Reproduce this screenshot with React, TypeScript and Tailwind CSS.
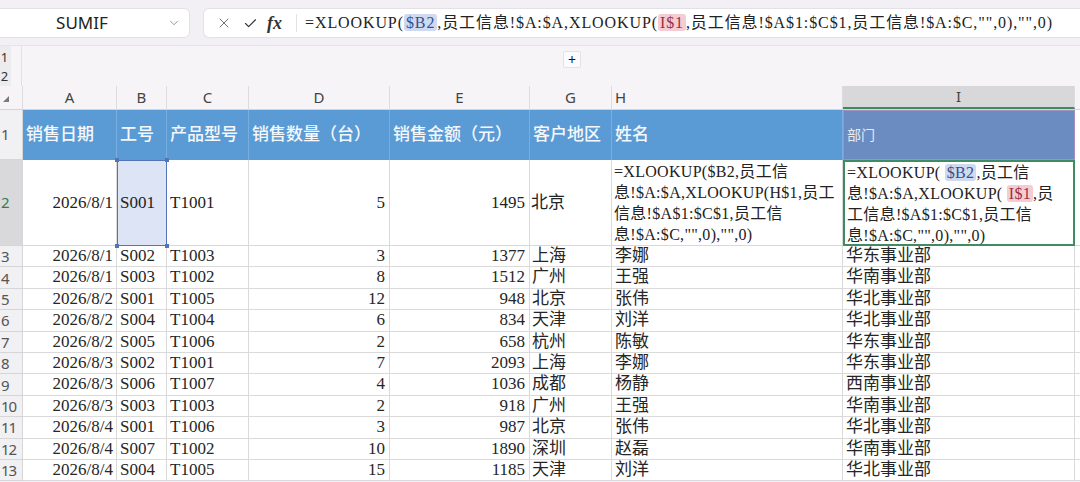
import { X, Check, ChevronDown } from "lucide-react";

const serif = "font-['Liberation_Serif','Noto_Sans_CJK_SC',serif]";
const sans = "font-['Noto_Sans','Liberation_Sans',sans-serif]";

// column widths for A, B, C, D, E, G, H, I
const colW = ["w-[94px]", "w-[50px]", "w-[82px]", "w-[141px]", "w-[140px]", "w-[82px]", "w-[231px]", "w-[232px]"];
const colNames = ["A", "B", "C", "D", "E", "G", "H", "I"];
const headers = ["销售日期", "工号", "产品型号", "销售数量（台）", "销售金额（元）", "客户地区", "姓名", "部门"];

type Row = [string, string, string, number, number, string, string, string];

const rows: Row[] = [
  ["2026/8/1", "S002", "T1003", 3, 1377, "上海", "李娜", "华东事业部"],
  ["2026/8/1", "S003", "T1002", 8, 1512, "广州", "王强", "华南事业部"],
  ["2026/8/2", "S001", "T1005", 12, 948, "北京", "张伟", "华北事业部"],
  ["2026/8/2", "S004", "T1004", 6, 834, "天津", "刘洋", "华北事业部"],
  ["2026/8/2", "S005", "T1006", 2, 658, "杭州", "陈敏", "华东事业部"],
  ["2026/8/3", "S002", "T1001", 7, 2093, "上海", "李娜", "华东事业部"],
  ["2026/8/3", "S006", "T1007", 4, 1036, "成都", "杨静", "西南事业部"],
  ["2026/8/3", "S003", "T1003", 2, 918, "广州", "王强", "华南事业部"],
  ["2026/8/4", "S001", "T1006", 3, 987, "北京", "张伟", "华北事业部"],
  ["2026/8/4", "S007", "T1002", 10, 1890, "深圳", "赵磊", "华南事业部"],
  ["2026/8/4", "S004", "T1005", 15, 1185, "天津", "刘洋", "华北事业部"],
];

const RefB2 = () => (
  <span className="bg-[#cfdaf1] text-[#34508f] rounded-[3px] px-[2px]">$B2</span>
);
const RefI1 = () => (
  <span className="bg-[#f3cdd3] text-[#9c2f3f] rounded-[3px] px-[2px]">I$1</span>
);

function RowHead({ n, active, h }: { n: number; active?: boolean; h: string }) {
  return (
    <div
      className={`w-[23px] shrink-0 ${h} border-r border-b border-[#d6d6d8] ${
        active ? "bg-[#d9d9db]" : "bg-[#f1f0f2]"
      } flex items-center pl-[1px] ${sans}`}
    >
      <span className={`text-[15px] tracking-[-1px] ${active ? "text-[#2f7d55]" : "text-[#555]"}`}>{n}</span>
    </div>
  );
}

export default function App() {
  return (
    <div className={`w-[1080px] h-[482px] overflow-hidden bg-[#f2f0f4] ${serif}`}>
      {/* name box + formula bar */}
      <div className="h-[45px] flex items-center pt-[1px]">
        <div className={`ml-[-6px] w-[196px] h-[30px] bg-white rounded-md border border-[#e3e1e6] flex items-center ${sans}`}>
          <span className="flex-1 text-center text-[17px] text-[#222] pl-[2px]">SUMIF</span>
          <ChevronDown className="w-[14px] h-[14px] text-[#888] mr-[8px]" strokeWidth={1.5} />
        </div>
        <div className="ml-[13px] flex-1 h-[30px] bg-white rounded-l-md border border-r-0 border-[#e3e1e6] flex items-center">
          <X className="ml-[12px] w-[16px] h-[16px] text-[#666]" strokeWidth={1.4} />
          <Check className="ml-[11px] w-[15px] h-[15px] text-[#333]" strokeWidth={1.8} />
          <span className="ml-[9px] text-[18px] italic font-bold text-[#333] leading-none">fx</span>
          <span className="ml-[14px] w-px h-[18px] bg-[#e2e2e2]" />
          <div className="ml-[8px] text-[16px] text-[#222] whitespace-nowrap tracking-[0.9px]">
            =XLOOKUP(<RefB2 />,员工信息!$A:$A,XLOOKUP(<RefI1 />,员工信息!$A$1:$C$1,员工信息!$A:$C,"",0),"",0)
          </div>
        </div>
      </div>

      {/* outline levels strip */}
      <div className="h-[41px] flex bg-[#f6f4f7] border-t border-[#e6e4e8]">
        <div className={`w-[11px] flex flex-col items-center justify-center gap-[1px] bg-[#ecebee] text-[13px] text-[#333] leading-[18px] ${sans}`}>
          <span className="ml-[-2px]">1</span>
          <span className="ml-[-2px]">2</span>
        </div>
        <div className="w-[11px] border-r border-[#e2e0e4]" />
        <div className="flex-1 flex justify-center pt-[5px]">
          <div className="ml-[42px] w-[18px] h-[17px] bg-[#fbfafc] border border-[#e4e2e6] rounded-[2px] flex items-center justify-center text-[14px] font-bold text-[#111] leading-none">
            +
          </div>
        </div>
      </div>

      {/* column letters */}
      <div className={`h-[24px] flex bg-[#f6f4f7] border-b border-[#d4d3d6] ${sans}`}>
        <div className="w-[23px] shrink-0 border-r border-[#dcdbde] relative">
          <div className="absolute left-[3px] bottom-[7px] w-0 h-0 border-l-[6px] border-l-transparent border-b-[6px] border-b-[#7a7a7a]" />
        </div>
        {colNames.map((c, i) => (
          <div
            key={c}
            className={`${colW[i]} shrink-0 flex items-center text-[15px] text-[#444] border-r border-[#dcdbde] ${
              i === 7 ? "bg-[#d8d7da] border-b-2 border-b-[#3b8a60] justify-center" : i === 6 ? "pl-[3px]" : "justify-center"
            }`}
          >
            {c}
          </div>
        ))}
      </div>

      {/* sheet */}
      <div className="bg-white">
        {/* header row */}
        <div className="flex h-[50px]">
          <RowHead n={1} h="h-[50px]" />
          {headers.map((t, i) => (
            <div
              key={t}
              className={`${colW[i]} shrink-0 flex items-center pl-[3px] ${
                i === 7
                  ? "bg-[#6a8cc1] border border-[#a58fbf] text-[14px] text-[#e6e9f2]"
                  : "bg-[#5b9bd5] border-r border-[#78afe0] text-[17px] text-[#f4f8fc] font-medium"
              } whitespace-nowrap`}
            >
              {t}
            </div>
          ))}
          <div className="flex-1 bg-white" />
        </div>

        {/* row 2 with formulas */}
        <div className="flex h-[86px] text-[17px] text-[#222]">
          <RowHead n={2} active h="h-[86px]" />
          <div className={`${colW[0]} shrink-0 flex items-center justify-end pr-[3px] border-r border-b border-[#d9d9d9]`}>2026/8/1</div>
          <div className={`${colW[1]} shrink-0 flex items-center pl-[2px] bg-[#dce4f5] border border-[#5474b9] relative`}>
            S001
            <span className="absolute -left-[3px] -top-[3px] w-[4px] h-[4px] bg-[#5474b9]" />
            <span className="absolute -right-[3px] -top-[3px] w-[4px] h-[4px] bg-[#5474b9]" />
            <span className="absolute -left-[3px] -bottom-[3px] w-[4px] h-[4px] bg-[#5474b9]" />
            <span className="absolute -right-[3px] -bottom-[3px] w-[4px] h-[4px] bg-[#5474b9]" />
          </div>
          <div className={`${colW[2]} shrink-0 flex items-center pl-[3px] border-r border-b border-[#d9d9d9]`}>T1001</div>
          <div className={`${colW[3]} shrink-0 flex items-center justify-end pr-[4px] border-r border-b border-[#d9d9d9]`}>5</div>
          <div className={`${colW[4]} shrink-0 flex items-center justify-end pr-[4px] border-r border-b border-[#d9d9d9]`}>1495</div>
          <div className={`${colW[5]} shrink-0 flex items-center pl-[1px] border-r border-b border-[#d9d9d9]`}>北京</div>
          <div className={`${colW[6]} shrink-0 pl-[2px] pt-[1px] text-[16px] leading-[21px] tracking-[0.3px] whitespace-nowrap border-r border-b border-[#d9d9d9]`}>
            <div>=XLOOKUP($B2,员工信</div>
            <div>息!$A:$A,XLOOKUP(H$1,员工</div>
            <div>信息!$A$1:$C$1,员工信</div>
            <div>息!$A:$C,"",0),"",0)</div>
          </div>
          <div className={`${colW[7]} shrink-0 pl-[2px] text-[16px] leading-[21px] tracking-[0.3px] whitespace-nowrap border-2 border-[#3f8c62]`}>
            <div>=XLOOKUP( <RefB2 />,员工信</div>
            <div>息!$A:$A,XLOOKUP( <RefI1 />,员</div>
            <div>工信息!$A$1:$C$1,员工信</div>
            <div>息!$A:$C,"",0),"",0)</div>
          </div>
          <div className="flex-1 border-b border-[#d9d9d9]" />
        </div>

        {/* data rows */}
        {rows.map((r, idx) => (
          <div key={idx} className="flex h-[21.4px] text-[17px] leading-[20px] text-[#262626]">
            <RowHead n={idx + 3} h="h-[21.4px]" />
            <div className={`${colW[0]} shrink-0 text-right pr-[3px] border-r border-b border-[#dadada]`}>{r[0]}</div>
            <div className={`${colW[1]} shrink-0 pl-[3px] border-r border-b border-[#dadada]`}>{r[1]}</div>
            <div className={`${colW[2]} shrink-0 pl-[3px] border-r border-b border-[#dadada]`}>{r[2]}</div>
            <div className={`${colW[3]} shrink-0 text-right pr-[4px] border-r border-b border-[#dadada]`}>{r[3]}</div>
            <div className={`${colW[4]} shrink-0 text-right pr-[4px] border-r border-b border-[#dadada]`}>{r[4]}</div>
            <div className={`${colW[5]} shrink-0 pl-[2px] border-r border-b border-[#dadada]`}>{r[5]}</div>
            <div className={`${colW[6]} shrink-0 pl-[3px] border-r border-b border-[#dadada]`}>{r[6]}</div>
            <div className={`${colW[7]} shrink-0 pl-[3px] border-r border-b border-[#dadada]`}>{r[7]}</div>
            <div className="flex-1 border-b border-[#dadada]" />
          </div>
        ))}
      </div>
    </div>
  );
}
